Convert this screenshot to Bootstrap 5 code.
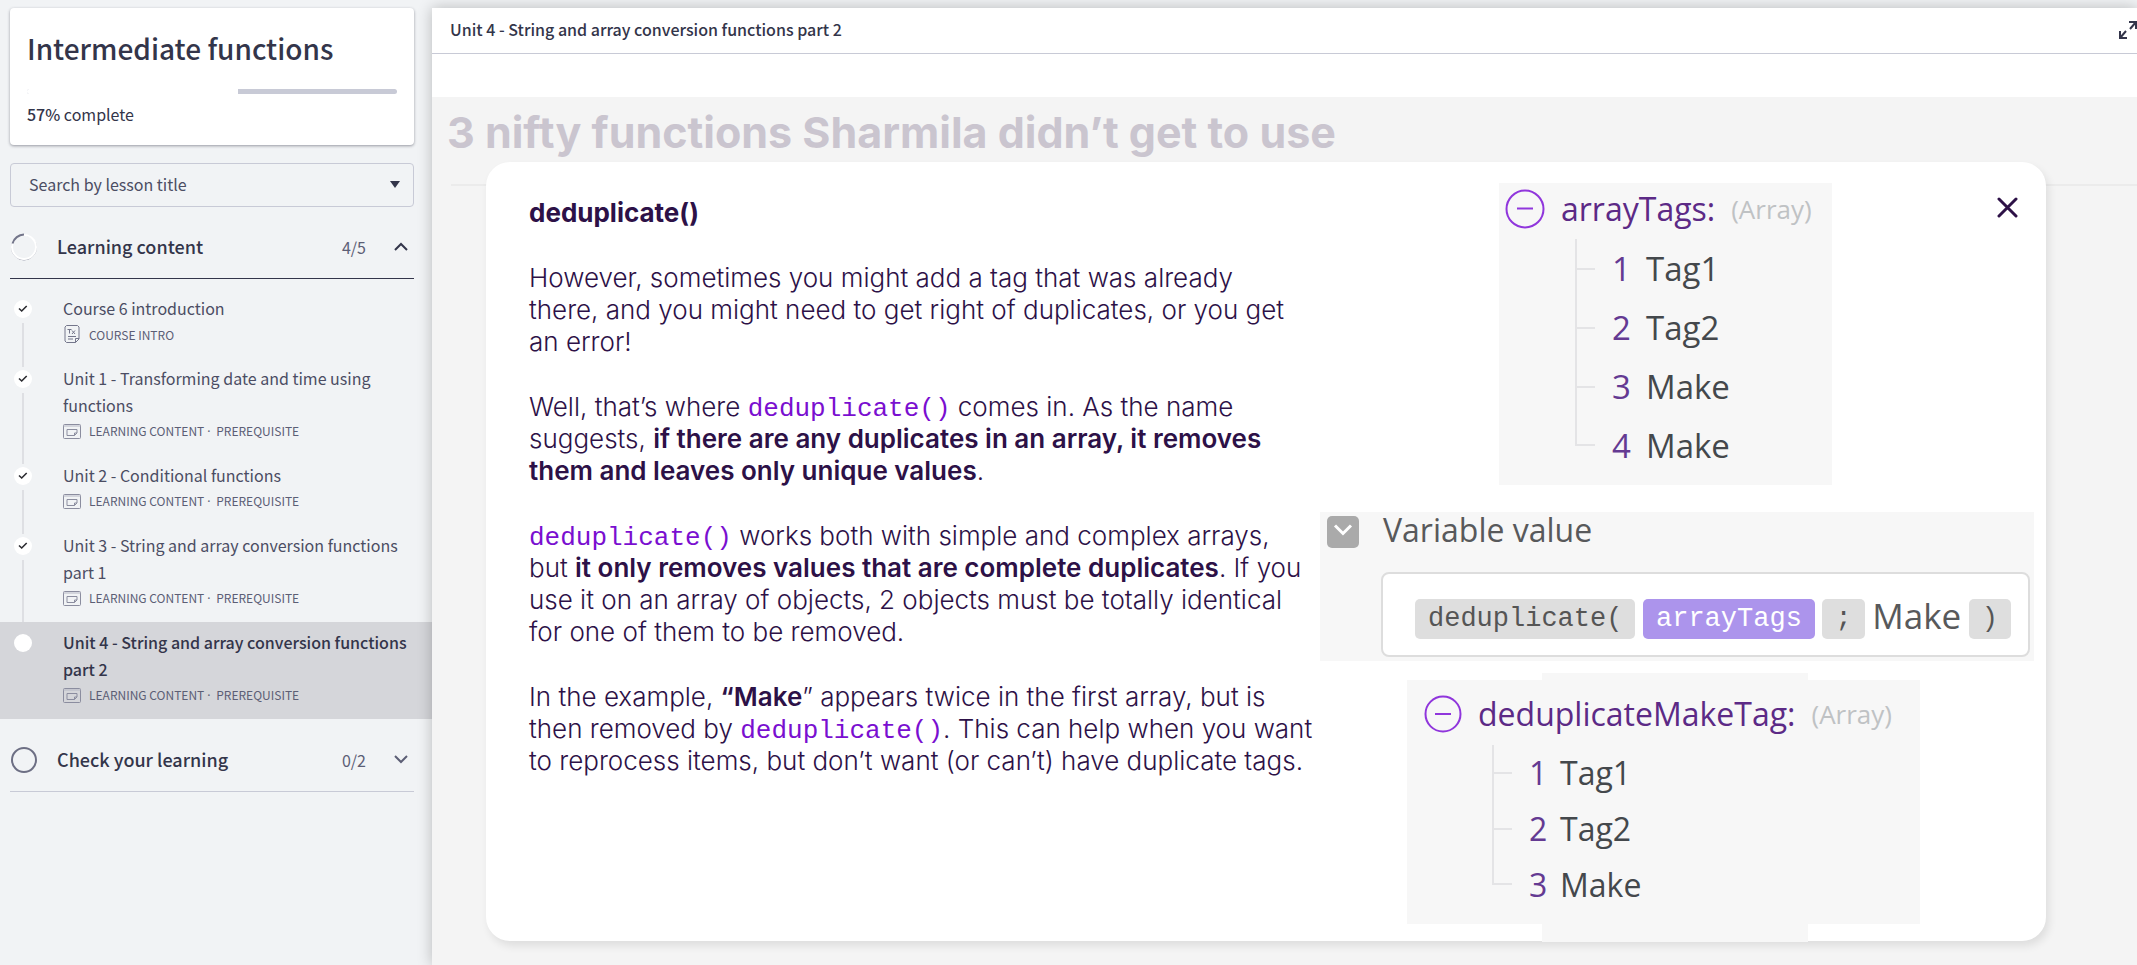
<!DOCTYPE html>
<html lang="en">
<head>
<meta charset="utf-8">
<meta name="viewport" content="width=device-width, initial-scale=1">
<title>Intermediate functions</title>
<link rel="stylesheet" href="https://cdn.jsdelivr.net/npm/bootstrap@5.3.0/dist/css/bootstrap.min.css">
<style>
  :root { --ink: #33354a; --soft: #5c5e75; --rule: #c8cad6; --plum: #2d1147; --violet: #7a0fd0; }
  body { background: #f1f3f5; color: var(--ink); font-family: "Noto Sans CJK SC", sans-serif; overflow-x: hidden; }
  svg { display: block; flex: none; }

  /* Sidebar */
  .course-nav { width: 432px; padding-top: 8px; }
  .course-card { margin: 0 18px 18px 10px; padding: 18px 17px; height: 137px; border-radius: 4px; box-shadow: 0 1px 3px rgba(40,42,60,.45); }
  .course-card h1 { font-size: 28px; line-height: 44px; font-weight: 500; margin-bottom: 19px; }
  .course-card .progress { height: 5px; border-radius: 3px; background: var(--rule); }
  .course-card .progress-bar { background: #fff; }
  .course-card p { font-size: 16px; line-height: 28px; margin-top: 6px; }
  .course-card strong { font-weight: 500; }
  .lesson-search { margin: 0 18px 8px 10px; }
  .lesson-search select { height: 44px; padding: 0 18px 2px; font-size: 16px; color: #4b4d63; background: transparent; border: 1px solid var(--rule); border-radius: 4px; appearance: none; }
  .lesson-search svg { position: absolute; right: 14px; top: 18px; pointer-events: none; }
  .section-toggle { display: flex; align-items: center; width: 404px; height: 64px; margin-left: 10px; padding: 0 6px 0 0; border: 0; border-bottom: 1px solid var(--rule); background: none; color: var(--ink); font-size: 18px; font-weight: 500; text-align: left; }
  .section-toggle.is-open { border-color: var(--ink); }
  .section-toggle .ring { margin-right: 19px; }
  .section-toggle .tally { font-size: 16px; font-weight: 400; color: var(--soft); margin: 0 28px 0 auto; }
  .lessons { padding-top: 9px; margin-bottom: 9px; }
  .lesson { display: flex; padding: 7px 18px 12px 14px; color: #4b4d63; text-decoration: none; font-size: 16px; line-height: 27px; position: relative; }
  .lesson.is-current { background: #d5d6da; color: var(--ink); font-weight: 500; }
  .lesson .tick { width: 18px; margin: 5px 31px 0 0; }
  .lesson .thread { position: absolute; left: 22px; top: 35px; bottom: -9px; width: 2px; background: #dedfe3; }
  .lesson .kind { display: flex; align-items: center; gap: 8px; height: 24px; font-size: 12px; font-weight: 400; color: var(--soft); }
  .lesson .dot { font-family: "Noto Sans", sans-serif; margin: 0 3px; }

  /* Lesson pane */
  .lesson-pane { margin-top: 8px; box-shadow: 0 0 14px rgba(0,0,0,.24); position: relative; background: #f4f4f4; }
  .pane-bar { height: 46px; padding: 0 0 1px 18px; border-bottom: 1px solid var(--rule); }
  .pane-bar h2 { font-size: 16px; font-weight: 500; line-height: 24px; margin: 0 0 2px; }
  .pane-bar button { border: 0; padding: 0; background: none; }
  .pane-gap { height: 43px; }
  .slide { font-family: Inter, sans-serif; }
  .slide-title { height: 65px; line-height: 70px; padding-left: 15px; margin: 0; font-size: 43px; font-weight: 700; color: #cac5cf; white-space: nowrap; }
  .slide-rule { position: absolute; top: 87px; left: 19px; right: 0; height: 2px; background: #ebebeb; }
  .popup { position: relative; margin: 0 91px 24px 54px; padding: 21px 12px 0 43px; background: #fff; border-radius: 24px; box-shadow: 3px 5px 9px rgba(0,0,0,.09); color: var(--plum); }
  .popup-text { width: 791px; padding-top: 12px; white-space: nowrap; font-size: 26px; line-height: 32px; font-weight: 300; }
  .popup-text h3 { font-size: 26px; line-height: 36px; font-weight: 700; margin-bottom: 31px; }
  .popup-text p { margin-bottom: 33px; }
  .popup-text b { font-weight: 600; }
  .popup-text code { font: 26px/24px "Liberation Mono", monospace; color: var(--violet); }
  .popup-close { position: absolute; right: 24px; top: 31px; padding: 4px; border: 0; background: none; }

  /* Output samples */
  .sample { background: #f7f7f7; font-family: "Open Sans", sans-serif; color: #44484c; font-size: 32px; }
  .sample .sample-name { display: flex; align-items: center; color: #5c2a86; line-height: 40px; }
  .sample .sample-type { color: #bfc2c4; font-size: 26px; }
  .tree-list { list-style: none; margin: 0; padding: 0; border: 0; }
  .tree-list li { display: flex; align-items: center; line-height: 40px; }
  .tree-list li > span { color: #643a92; width: 34px; }
  .tree-list li::before { content: ""; align-self: stretch; width: 20px; margin-right: 17px; border-left: 2px solid #e4e4e6; background: linear-gradient(#e4e4e6, #e4e4e6) 0 50% / 100% 2px no-repeat; }
  .tree-list li:last-child::before { align-self: flex-start; height: 50%; background-position: 0 100%; }
  .tree-a { width: 333px; height: 302px; margin-left: 179px; padding: 6px 6px 0; }
  .tree-a .tree-list { margin: 10px 0 0 70px; font-size: 33px; }
  .tree-a li { height: 59px; }
  .tree-b { width: 513px; height: 244px; margin-left: 87px; padding: 14px 17px 0; position: relative; }
  .tree-b .tree-list { margin: 11px 0 0 68px; }
  .tree-b li { height: 56px; }
  .tree-b li > span { width: 31px; }
  .tree-b::before { content: ""; position: absolute; left: 135px; right: 112px; top: -7px; bottom: -18px; background: #f7f7f7; }
  .tree-b > * { position: relative; }
  .formula { height: 149px; margin: 27px 0 19px; padding: 4px 4px 0 7px; color: #58595b; line-height: 28px; }
  .formula-line { height: 85px; margin: 24px 0 0 54px; padding: 9px 17px 0 32px; background: #fff; border: 2px solid #ddd; border-radius: 8px; }
  .formula-line .typed { font-size: 35px; padding-bottom: 6px; }
  .formula-line .chip { height: 40px; line-height: 40px; border-radius: 5px; background: #dedede; color: #555; font-family: "Liberation Mono", monospace; font-size: 27px; padding: 0 13px; }
  .formula-line .chip.is-var { background: #ac94ec; color: #fff; }
</style>
</head>
<body>
<svg class="d-none" aria-hidden="true">
  <symbol id="check" viewBox="0 0 18 18"><circle cx="9" cy="9" r="9" fill="#fff"/><path d="M5 8.500l2.700 2.500 5-5" fill="none" stroke="#2b2b30" stroke-width="1.600"/></symbol>
  <symbol id="page" viewBox="0 0 18 15"><g fill="none" stroke="#8b8d9f"><rect x=".5" y=".5" width="17" height="14" rx="1"/><path d="M.5 2h17" stroke="#b5b7c4"/><path d="M4 5.500h10v3.500l-2.500 2.500h-7.500zM14 9h-2.500v2.500"/></g></symbol>
</svg>
<div class="d-flex min-vh-100">
  <nav class="course-nav flex-shrink-0" aria-label="Course">
    <div class="course-card bg-white">
      <h1>Intermediate functions</h1>
      <div class="progress" role="progressbar" aria-label="Course progress" aria-valuenow="57" aria-valuemin="0" aria-valuemax="100"><div class="progress-bar" style="width:57%"></div></div>
      <p class="mb-0"><strong>57%</strong> complete</p>
    </div>
    <div class="lesson-search position-relative">
      <select class="w-100" aria-label="Search by lesson title"><option>Search by lesson title</option></select>
      <svg width="10" height="7"><path d="M0 0h10L5 7z" fill="#33354a"/></svg>
    </div>
    <button class="section-toggle is-open" type="button" aria-expanded="true">
      <svg class="ring" width="28" height="28" viewBox="0 0 28 28" fill="none"><circle cx="14" cy="14.500" r="12.500" stroke="#9a9cab"/><circle cx="14" cy="14" r="12" stroke="#fff" stroke-width="2"/><path d="M2.500 10.500A12.500 12.500 0 0 1 14 1.500" stroke="#73758a" stroke-width="2"/></svg>
      Learning content <span class="tally">4/5</span>
      <svg width="14" height="9" fill="none" stroke="#33354a" stroke-width="2"><path d="M1 8l6-6 6 6"/></svg>
    </button>
    <ol class="lessons list-unstyled">
      <li><a class="lesson" href="#"><svg class="tick" width="18" height="18"><use href="#check"/></svg><i class="thread"></i>
        <div>Course 6 introduction<div class="kind"><svg width="18" height="18" viewBox="0 0 18 18" fill="none" stroke="#74768b"><path d="M3.500.500h11l1.500 1.500v12l-3.500 3.500h-9l-1.500-1.500v-14zM16 13.500h-3.500v4M5 11.500h8M5 14h5M4.500 4.500h4M6.500 4.500v4M9 5.500l3 3.500M12 5.500l-3 3.500"/></svg>COURSE INTRO</div></div></a></li>
      <li><a class="lesson" href="#"><svg class="tick" width="18" height="18"><use href="#check"/></svg><i class="thread"></i>
        <div>Unit 1 - Transforming date and time using<br>functions<div class="kind"><svg width="18" height="15"><use href="#page"/></svg><span>LEARNING CONTENT<span class="dot">·</span> PREREQUISITE</span></div></div></a></li>
      <li><a class="lesson" href="#"><svg class="tick" width="18" height="18"><use href="#check"/></svg><i class="thread"></i>
        <div>Unit 2 - Conditional functions<div class="kind"><svg width="18" height="15"><use href="#page"/></svg><span>LEARNING CONTENT<span class="dot">·</span> PREREQUISITE</span></div></div></a></li>
      <li><a class="lesson" href="#"><svg class="tick" width="18" height="18"><use href="#check"/></svg><i class="thread"></i>
        <div class="text-nowrap">Unit 3 - String and array conversion functions<br>part 1<div class="kind"><svg width="18" height="15"><use href="#page"/></svg><span>LEARNING CONTENT<span class="dot">·</span> PREREQUISITE</span></div></div></a></li>
      <li><a class="lesson is-current" href="#" aria-current="page"><svg class="tick" width="18" height="18"><circle cx="9" cy="9" r="9" fill="#fff"/></svg>
        <div class="text-nowrap">Unit 4 - String and array conversion functions<br>part 2<div class="kind"><svg width="18" height="15"><use href="#page"/></svg><span>LEARNING CONTENT<span class="dot">·</span> PREREQUISITE</span></div></div></a></li>
    </ol>
    <button class="section-toggle" type="button" aria-expanded="false">
      <svg class="ring" width="28" height="28" fill="none"><circle cx="14" cy="14" r="12" stroke="#6d6f84" stroke-width="2"/></svg>
      Check your learning <span class="tally">0/2</span>
      <svg width="14" height="9" fill="none" stroke="#5c5e75" stroke-width="2"><path d="M1 1l6 6 6-6"/></svg>
    </button>
  </nav>

  <main class="lesson-pane flex-grow-1 d-flex flex-column">
    <header class="pane-bar d-flex align-items-center justify-content-between bg-white">
      <h2>Unit 4 - String and array conversion functions part 2</h2>
      <button type="button" aria-label="Full screen"><svg width="18" height="18" fill="none" stroke="#33354a" stroke-width="2"><path d="M10 1h7v7M17 1l-6 7M8 17H1v-7M1 17l6-7"/></svg></button>
    </header>
    <div class="pane-gap bg-white"></div>
    <section class="slide position-relative flex-grow-1 d-flex flex-column">
      <h2 class="slide-title">3 nifty functions Sharmila didn’t get to use</h2>
      <div class="slide-rule"></div>
      <article class="popup flex-grow-1 d-flex">
        <div class="popup-text flex-shrink-0">
          <h3>deduplicate()</h3>
          <p>However, sometimes you might add a tag that was already<br>there, and you might need to get right of duplicates, or you get<br>an error!</p>
          <p>Well, that’s where <code>deduplicate()</code> comes in. As the name<br>suggests, <b>if there are any duplicates in an array, it removes<br>them and leaves only unique values</b>.</p>
          <p><code>deduplicate()</code> works both with simple and complex arrays,<br>but <b>it only removes values that are complete duplicates</b>. If you<br>use it on an array of objects, 2 objects must be totally identical<br>for one of them to be removed.</p>
          <p>In the example, <b>“Make</b>” appears twice in the first array, but is<br>then removed by <code>deduplicate()</code>. This can help when you want<br>to reprocess items, but don’t want (or can’t) have duplicate tags.</p>
        </div>
        <div class="flex-grow-1">
          <div class="sample tree-a">
            <div class="sample-name"><svg width="40" height="40" fill="none" stroke="#9036dc" stroke-width="2"><circle cx="20" cy="20" r="18.500"/><path d="M12 19.500h16"/></svg><span class="ms-3">arrayTags:</span><span class="sample-type ms-3">(Array)</span></div>
            <ol class="tree-list"><li><span>1</span>Tag1</li><li><span>2</span>Tag2</li><li><span>3</span>Make</li><li><span>4</span>Make</li></ol>
          </div>
          <div class="sample formula">
            <div class="d-flex align-items-start"><svg width="32" height="32" fill="none"><rect width="32" height="32" rx="5" fill="#aaa"/><path d="M8 9.500l8 8 8-8" stroke="#fff" stroke-width="3"/></svg><span class="ms-4">Variable value</span></div>
            <div class="formula-line d-flex align-items-center justify-content-between"><span class="chip">deduplicate(</span><span class="chip is-var">arrayTags</span><span class="chip">;</span><span class="typed">Make</span><span class="chip">)</span></div>
          </div>
          <div class="sample tree-b">
            <div class="sample-name"><svg width="38" height="38" fill="none" stroke="#9036dc" stroke-width="2"><circle cx="19" cy="19" r="17.500"/><path d="M11 19h16"/></svg><span class="ms-3">deduplicateMakeTag:</span><span class="sample-type ms-3">(Array)</span></div>
            <ol class="tree-list"><li><span>1</span>Tag1</li><li><span>2</span>Tag2</li><li><span>3</span>Make</li></ol>
          </div>
        </div>
        <button class="popup-close" type="button" aria-label="Close"><svg width="21" height="21" stroke="#2d1147" stroke-width="3" stroke-linecap="round"><path d="M2 2l17 17M19 2L2 19"/></svg></button>
      </article>
    </section>
  </main>
</div>
<script src="https://cdn.jsdelivr.net/npm/bootstrap@5.3.0/dist/js/bootstrap.bundle.min.js"></script>
</body>
</html>
